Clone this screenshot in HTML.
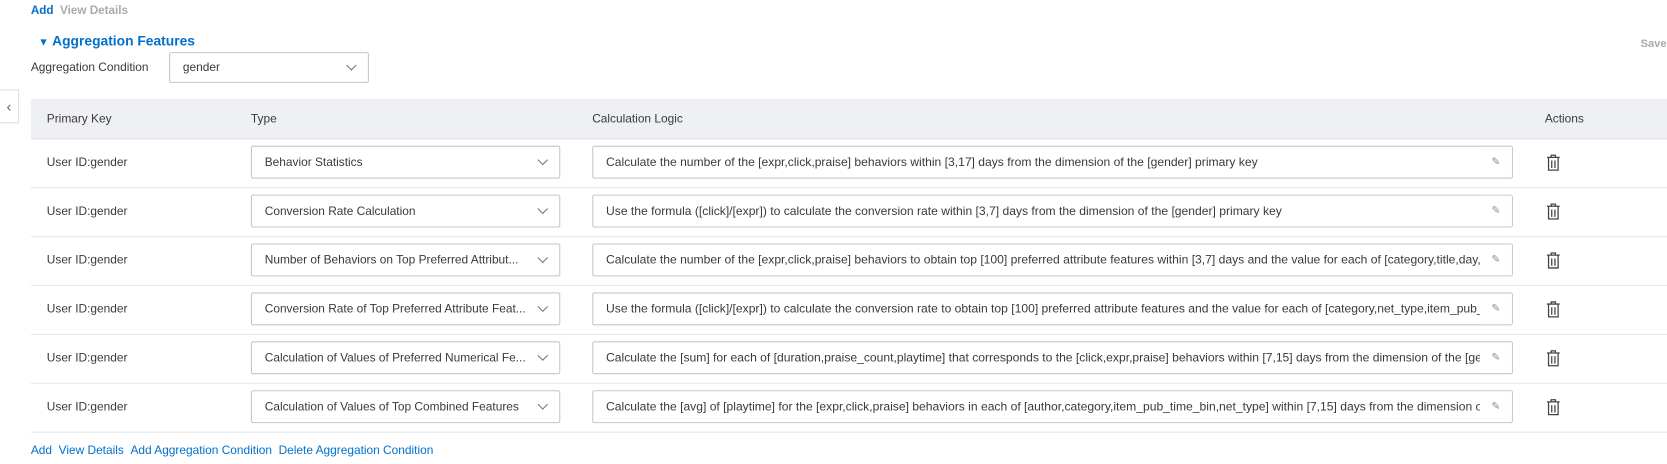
<!DOCTYPE html>
<html><head><meta charset="utf-8"><style>
*{box-sizing:border-box;margin:0;padding:0}
body{width:1667px;height:463px;background:#fff;font-family:"Liberation Sans",sans-serif;font-size:11.2px;color:#3a3a3a;position:relative;overflow:hidden}
#w{position:absolute;left:0;top:0;width:1568px;height:436px;transform:scale(1.0632);transform-origin:0 0}
.a{position:absolute;white-space:nowrap}
.blue{color:#0070cc}
.box{position:absolute;border:1px solid #c4c6cf;border-radius:2px;background:#fff;height:31px;line-height:30px;padding-left:12px;white-space:nowrap;overflow:hidden}
.chev{position:absolute;right:12px;top:9px;width:7px;height:7px;border-right:1px solid #777;border-bottom:1px solid #777;transform:rotate(45deg)}
.row{position:absolute;left:29px;width:1611px;height:46px;border-bottom:1px solid #e6e7eb}
</style></head><body><div id="w">
<div class="a blue" style="left:29px;top:4px;font-weight:bold;font-size:11px">Add <span style="color:#aaa;margin-left:3px">View Details</span></div>
<div class="a blue" style="left:36px;top:31px;font-size:13px;font-weight:bold"><span style="font-size:10px">▼</span> Aggregation Features</div>
<div class="a" style="left:1543px;top:35px;color:#aaa;font-size:10.5px;font-weight:bold">Save</div>
<div class="a" style="left:29px;top:58px">Aggregation Condition</div>
<div class="box" style="left:159px;top:49px;width:188px;height:29px;line-height:28px">gender<span class="chev" style="top:8px"></span></div>
<div class="a" style="left:0;top:84px;width:18px;height:32px;border:1px solid #ddd;border-left:none;background:#fff;text-align:center;line-height:30px;color:#666;font-size:14px">‹</div>
<div class="a" style="left:29px;top:93px;width:1540px;height:38px;background:#eef0f4;border-bottom:1px solid #dcdee3"></div>
<div class="a" style="left:44px;top:106px">Primary Key</div>
<div class="a" style="left:236px;top:106px">Type</div>
<div class="a" style="left:557px;top:106px">Calculation Logic</div>
<div class="a" style="left:1453px;top:106px">Actions</div>
<div id="rows"></div>
<div class="a blue" style="left:29px;top:418px">Add &nbsp;View Details &nbsp;Add Aggregation Condition &nbsp;Delete Aggregation Condition</div>
</div>
<script>
var t=["Behavior Statistics","Conversion Rate Calculation","Number of Behaviors on Top Preferred Attribut...","Conversion Rate of Top Preferred Attribute Feat...","Calculation of Values of Preferred Numerical Fe...","Calculation of Values of Top Combined Features"];
var l=["Calculate the number of the [expr,click,praise] behaviors within [3,17] days from the dimension of the [gender] primary key","Use the formula ([click]/[expr]) to calculate the conversion rate within [3,7] days from the dimension of the [gender] primary key","Calculate the number of the [expr,click,praise] behaviors to obtain top [100] preferred attribute features within [3,7] days and the value for each of [category,title,day,","Use the formula ([click]/[expr]) to calculate the conversion rate to obtain top [100] preferred attribute features and the value for each of [category,net_type,item_pub_","Calculate the [sum] for each of [duration,praise_count,playtime] that corresponds to the [click,expr,praise] behaviors within [7,15] days from the dimension of the [ge","Calculate the [avg] of [playtime] for the [expr,click,praise] behaviors in each of [author,category,item_pub_time_bin,net_type] within [7,15] days from the dimension o"];
var h="";
for(var i=0;i<6;i++){var y=131+i*46;
h+='<div class="row" style="top:'+y+'px"></div>';
h+='<div class="a" style="left:44px;top:'+(y+16)+'px">User ID:gender</div>';
h+='<div class="box" style="left:236px;top:'+(y+6)+'px;width:291px;padding-right:30px">'+t[i]+'<span class="chev"></span></div>';
h+='<div class="box" style="left:557px;top:'+(y+6)+'px;width:866px;font-size:11.4px;padding-right:30px">'+l[i]+'<span style="position:absolute;right:0;top:0;width:30px;height:29px;background:#fff;text-align:center;color:#888;font-size:10px">✎</span></div>';
h+='<svg class="a" style="left:1454px;top:'+(y+14)+'px" width="14" height="16" viewBox="0 0 14 16"><path d="M1 3h12M5 3V1h4v2M2.5 3.5v11.5h9V3.5M5.5 6v7M8.5 6v7" fill="none" stroke="#444" stroke-width="1.2"/></svg>';}
document.getElementById("rows").innerHTML=h;
</script>
</body></html>
